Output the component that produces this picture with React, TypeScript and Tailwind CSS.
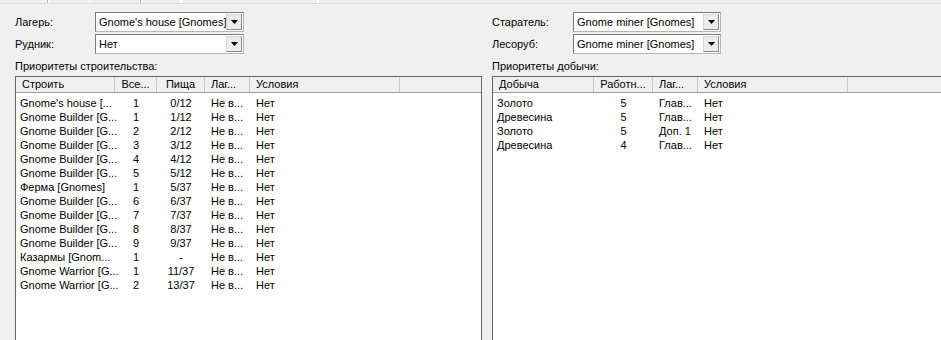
import React from 'react'

// Camp settings form: two combos per side, two list views with priorities

type Col = { title: string; w: number; align: 'left' | 'center'; pad?: string }

const buildCols: Col[] = [
  { title: 'Строить', w: 99, align: 'left', pad: 'pl-[4px]' },
  { title: 'Все...', w: 42, align: 'center' },
  { title: 'Пища', w: 48, align: 'center' },
  { title: 'Лаг...', w: 45, align: 'left', pad: 'pl-[6px]' },
  { title: 'Условия', w: 150, align: 'left', pad: 'pl-[6px]' },
]

const buildRows = [
  ["Gnome's house [...", '1', '0/12', 'Не в...', 'Нет'],
  ['Gnome Builder [G...', '1', '1/12', 'Не в...', 'Нет'],
  ['Gnome Builder [G...', '2', '2/12', 'Не в...', 'Нет'],
  ['Gnome Builder [G...', '3', '3/12', 'Не в...', 'Нет'],
  ['Gnome Builder [G...', '4', '4/12', 'Не в...', 'Нет'],
  ['Gnome Builder [G...', '5', '5/12', 'Не в...', 'Нет'],
  ['Ферма [Gnomes]', '1', '5/37', 'Не в...', 'Нет'],
  ['Gnome Builder [G...', '6', '6/37', 'Не в...', 'Нет'],
  ['Gnome Builder [G...', '7', '7/37', 'Не в...', 'Нет'],
  ['Gnome Builder [G...', '8', '8/37', 'Не в...', 'Нет'],
  ['Gnome Builder [G...', '9', '9/37', 'Не в...', 'Нет'],
  ['Казармы [Gnom...', '1', '-', 'Не в...', 'Нет'],
  ['Gnome Warrior [G...', '1', '11/37', 'Не в...', 'Нет'],
  ['Gnome Warrior [G...', '2', '13/37', 'Не в...', 'Нет'],
]

const mineCols: Col[] = [
  { title: 'Добыча', w: 101, align: 'left', pad: 'pl-[4px]' },
  { title: 'Работн...', w: 59, align: 'center' },
  { title: 'Лаг...', w: 45, align: 'left', pad: 'pl-[6px]' },
  { title: 'Условия', w: 150, align: 'left', pad: 'pl-[6px]' },
]

const mineRows = [
  ['Золото', '5', 'Глав...', 'Нет'],
  ['Древесина', '5', 'Глав...', 'Нет'],
  ['Золото', '5', 'Доп. 1', 'Нет'],
  ['Древесина', '4', 'Глав...', 'Нет'],
]

function Combo({ value, width }: { value: string; width: string }) {
  return (
    <div className={`${width} h-[20px] flex items-stretch bg-white border border-[#7a7a7a] border-r-[#b5b5b5] border-b-[#b5b5b5]`}>
      <div className="flex-1 pl-[3px] leading-[18px] whitespace-nowrap overflow-hidden">{value}</div>
      <div className="w-[16px] my-[1px] mr-[1px] bg-[#ececec] border border-[#d6d6d6] border-r-[#8a8a8a] border-b-[#8a8a8a] flex items-center justify-center">
        <svg width="7" height="4" viewBox="0 0 7 4">
          <polygon points="0,0 7,0 3.5,4" fill="#000" />
        </svg>
      </div>
    </div>
  )
}

function FieldRow({ label, labelW, value, comboW, className = '' }: {
  label: string; labelW: string; value: string; comboW: string; className?: string
}) {
  return (
    <div className={`flex items-center ${className}`}>
      <div className={`${labelW} whitespace-nowrap`}>{label}</div>
      <Combo value={value} width={comboW} />
    </div>
  )
}

function ListView({ cols, rows, width }: { cols: Col[]; rows: string[][]; width: string }) {
  return (
    <div className={`${width} h-[270px] bg-white border border-[#646464] border-b-0 overflow-hidden`}>
      <div className="flex h-[16px] bg-[#f0f0f0] border-b border-[#a0a0a0]">
        {cols.map((c) => (
          <div
            key={c.title}
            style={{ width: c.w }}
            className={`shrink-0 border-r border-[#c8c8c8] leading-[15px] whitespace-nowrap ${c.align === 'center' ? 'text-center' : 'pl-[6px]'}`}
          >
            {c.title}
          </div>
        ))}
        <div className="flex-1" />
      </div>
      <div className="pt-[3px]">
        {rows.map((r, i) => (
          <div key={i} className="flex h-[14px] leading-[14px]">
            {r.map((cell, j) => (
              <div
                key={j}
                style={{ width: cols[j].w }}
                className={`shrink-0 whitespace-nowrap ${cols[j].align === 'center' ? 'text-center' : cols[j].pad}`}
              >
                {cell}
              </div>
            ))}
          </div>
        ))}
      </div>
    </div>
  )
}

export default function App() {
  return (
    <div className="w-[941px] h-[340px] overflow-hidden bg-[#f0f0f0] text-[11px] text-black font-['Liberation_Sans',Arial,sans-serif]">
      {/* Tab strip remnants */}
      <div className="flex h-[4px] border-b border-[#dadada]">
        <div className="w-[48px] border-r border-[#b0b0b0]" />
        <div className="w-[42px] border-l border-white border-r border-[#b0b0b0]" />
        <div className="w-[51px] border-r border-[#b0b0b0]" />
        <div className="w-[40px] border-l border-white border-r border-[#b0b0b0]" />
        <div className="w-[137px] border-l border-white border-r border-[#b0b0b0]" />
        <div className="flex-1 border-l border-white" />
      </div>

      <div className="flex gap-[10px] pl-[15px] pt-[8px]">
        {/* Left: camp & mine */}
        <div className="w-[467px] shrink-0">
          <FieldRow label="Лагерь:" labelW="w-[80px]" value="Gnome's house [Gnomes]" comboW="w-[149px]" />
          <FieldRow label="Рудник:" labelW="w-[80px]" value="Нет" comboW="w-[149px]" className="mt-[2px]" />
          <div className="mt-[5px] h-[14px] leading-[14px]">Приоритеты строительства:</div>
          <div className="mt-[3px]">
            <ListView cols={buildCols} rows={buildRows} width="w-[467px]" />
          </div>
        </div>

        {/* Right: prospector & woodcutter */}
        <div className="w-[460px] shrink-0">
          <FieldRow label="Старатель:" labelW="w-[81px]" value="Gnome miner [Gnomes]" comboW="w-[148px]" />
          <FieldRow label="Лесоруб:" labelW="w-[81px]" value="Gnome miner [Gnomes]" comboW="w-[148px]" className="mt-[2px]" />
          <div className="mt-[5px] h-[14px] leading-[14px]">Приоритеты добычи:</div>
          <div className="mt-[3px]">
            <ListView cols={mineCols} rows={mineRows} width="w-[460px]" />
          </div>
        </div>
      </div>
    </div>
  )
}
